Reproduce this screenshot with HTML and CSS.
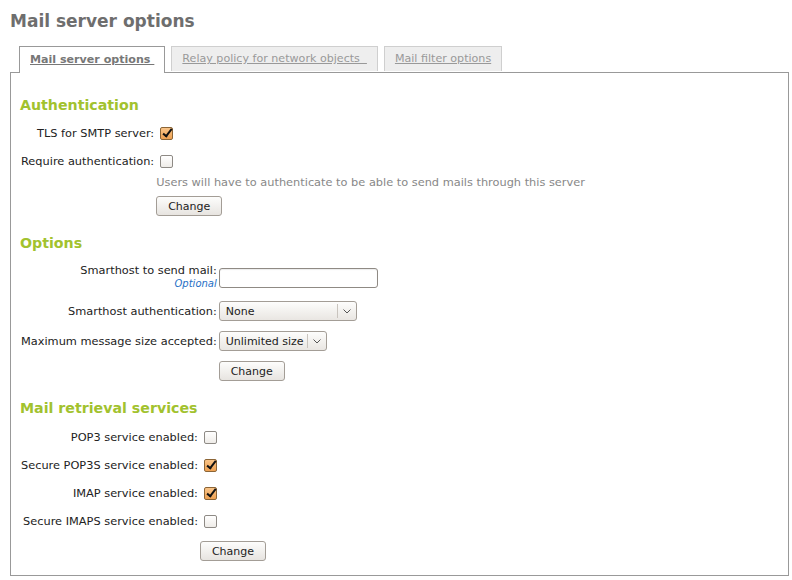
FILE: index.html
```html
<!DOCTYPE html>
<html lang="en">
<head>
<meta charset="utf-8">
<title>Mail server options</title>
<link rel="stylesheet" href="styles.css">
</head>
<body>
<div class="page">
  <h1 class="title">Mail server options</h1>
  <div class="tabs">
    <a class="tab active" href="#">Mail server options&nbsp;</a>
    <a class="tab" href="#">Relay policy for network objects&nbsp;&nbsp;</a>
    <a class="tab" href="#">Mail filter options</a>
  </div>
  <div class="panel">
    <section class="sec">
      <h2 class="heading">Authentication</h2>
      <div class="form">
        <label class="lbl">TLS for SMTP server:</label>
        <div class="fld"><input class="cb" type="checkbox" checked></div>
        <label class="lbl">Require authentication:</label>
        <div class="fld"><input class="cb" type="checkbox"></div>
        <div class="help">Users will have to authenticate to be able to send mails through this server</div>
        <div class="btnrow"><button class="btn" type="button">Change</button></div>
      </div>
    </section>
    <section class="sec">
      <h2 class="heading">Options</h2>
      <div class="form">
        <label class="lbl lbl-two"><span>Smarthost to send mail:</span><span class="optional">Optional</span></label>
        <div class="fld fld-top"><input class="text" type="text"></div>
        <label class="lbl tall">Smarthost authentication:</label>
        <div class="fld tall"><span class="select"><select class="sel w-none"><option>None</option></select><span class="arrow"><svg width="8" height="5" viewBox="0 0 8 5"><path d="M0.5 0.5 L4 4 L7.5 0.5" fill="none" stroke="#555" stroke-width="1"/></svg></span></span></div>
        <label class="lbl tall">Maximum message size accepted:</label>
        <div class="fld tall"><span class="select"><select class="sel w-size"><option>Unlimited size</option></select><span class="arrow"><svg width="8" height="5" viewBox="0 0 8 5"><path d="M0.5 0.5 L4 4 L7.5 0.5" fill="none" stroke="#555" stroke-width="1"/></svg></span></span></div>
        <div class="btnrow btnrow-tight"><button class="btn" type="button">Change</button></div>
      </div>
    </section>
    <section class="sec sec-wide">
      <h2 class="heading">Mail retrieval services</h2>
      <div class="form">
        <label class="lbl">POP3 service enabled:</label>
        <div class="fld"><input class="cb" type="checkbox"></div>
        <label class="lbl">Secure POP3S service enabled:</label>
        <div class="fld"><input class="cb" type="checkbox" checked></div>
        <label class="lbl">IMAP service enabled:</label>
        <div class="fld"><input class="cb" type="checkbox" checked></div>
        <label class="lbl">Secure IMAPS service enabled:</label>
        <div class="fld"><input class="cb" type="checkbox"></div>
        <div class="btnrow"><button class="btn" type="button">Change</button></div>
      </div>
    </section>
  </div>
</div>
</body>
</html>
```
FILE: styles.css
```css
body {
  margin: 0;
  background: #fff;
  font-family: "DejaVu Sans", "Liberation Sans", sans-serif;
  font-size: 11.35px;
  color: #222;
}

.page {
  margin-left: 10px;
  width: 779px;
}

.title {
  margin: 11px 0 14px;
  font-size: 17px;
  line-height: 21px;
  font-weight: bold;
  color: #6e6e6e;
}

.tabs {
  display: flex;
  align-items: flex-start;
  gap: 6px;
  padding-left: 9px;
  margin-bottom: -1px;
  position: relative;
  z-index: 1;
  font-size: 11.1px;
}

.tab {
  display: block;
  height: 24px;
  line-height: 24px;
  padding: 0 10px;
  border: 1px solid #cfcfcf;
  border-bottom: none;
  background: #eee;
  color: #999;
  text-decoration: underline;
}

.tab.active {
  height: 26px;
  line-height: 25px;
  background: #fff;
  border-color: #999;
  color: #777;
  font-weight: bold;
}

.panel {
  border: 1px solid #999;
  padding: 23px 9px 14px;
}

.sec + .sec {
  margin-top: 18px;
}

.heading {
  margin: 0 0 5px;
  font-size: 14.2px;
  line-height: 18px;
  font-weight: bold;
  color: #a2c22e;
}

.sec-wide .heading {
  margin-bottom: 6px;
}

.form {
  display: grid;
  grid-template-columns: max-content max-content;
  justify-content: start;
}

.lbl {
  grid-column: 1;
  display: flex;
  align-items: center;
  justify-content: flex-end;
  text-align: right;
  padding-left: 1px;
  padding-right: 2px;
  min-height: 28px;
}

.fld {
  grid-column: 2;
  display: flex;
  align-items: center;
  min-height: 28px;
}

.fld-top {
  align-items: flex-start;
  padding-top: 11px;
}

.tall {
  min-height: 30px;
}

.lbl-two {
  flex-direction: column;
  align-items: flex-end;
  justify-content: center;
  padding-top: 5px;
  padding-bottom: 5px;
  line-height: 14px;
}

.optional {
  font-size: 10px;
  font-style: italic;
  color: #1f6fc5;
}

.help {
  grid-column: 2;
  color: #888;
  line-height: 14px;
  padding-bottom: 1px;
}

.btnrow {
  grid-column: 2;
  padding-top: 6px;
}

.btnrow-tight {
  padding-top: 5px;
}

.btn {
  display: block;
  width: 66px;
  height: 20px;
  padding: 0;
  border: 1px solid #a39d96;
  border-radius: 3px;
  background: linear-gradient(#fdfdfc, #e7e4e0);
  font-family: inherit;
  font-size: 11px;
  color: #222;
}

.cb {
  appearance: none;
  -webkit-appearance: none;
  position: relative;
  width: 13px;
  height: 13px;
  margin: 0 0 0 4px;
  border: 1px solid #8e8a85;
  border-radius: 2px;
  background: linear-gradient(#fff, #efece8);
}

.cb:checked {
  border-color: #8c6536;
  background: linear-gradient(#f9c488, #eea152);
}

.cb:checked::after {
  content: "";
  position: absolute;
  left: 4px;
  top: -1px;
  width: 3px;
  height: 8px;
  border: solid #111;
  border-width: 0 2px 2px 0;
  transform: rotate(38deg);
}

.text {
  box-sizing: border-box;
  width: 159px;
  height: 20px;
  margin: 0;
  border: 1px solid #8f8a84;
  border-radius: 3px;
  background: #fff;
  box-shadow: inset 0 1px 1px rgba(0, 0, 0, 0.08);
}

.select {
  position: relative;
  display: inline-block;
}

.sel {
  appearance: none;
  -webkit-appearance: none;
  display: block;
  box-sizing: border-box;
  height: 20px;
  margin: 0;
  padding: 0 0 0 6px;
  border: 1px solid #a39d96;
  border-radius: 3px;
  background: linear-gradient(#fdfdfc, #e9e6e2);
  font-family: inherit;
  font-size: 11px;
  color: #222;
}

.w-none {
  width: 138px;
}

.w-size {
  width: 108px;
}

.arrow {
  position: absolute;
  top: 3px;
  right: 1px;
  bottom: 3px;
  width: 18px;
  display: flex;
  align-items: center;
  justify-content: center;
  border-left: 1px solid #c9c4be;
  pointer-events: none;
}
```
